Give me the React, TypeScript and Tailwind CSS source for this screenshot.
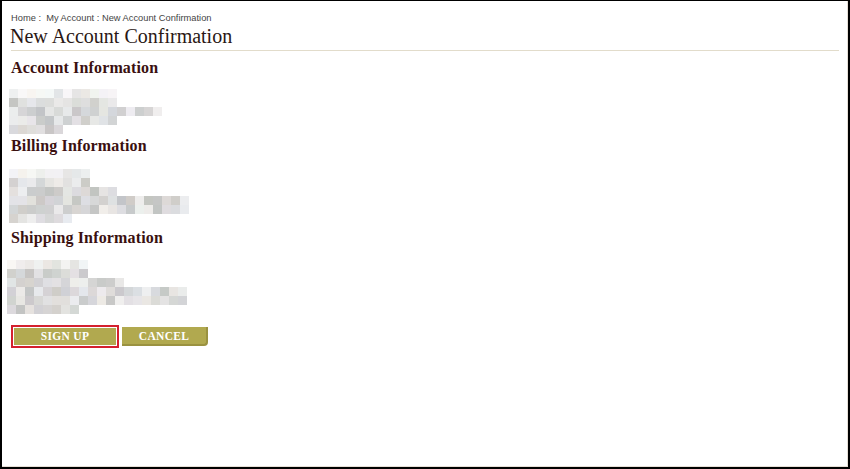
import React from "react";

function rng(seed: number) {
  let s = seed;
  return () => {
    s = (s * 1103515245 + 12345) & 0x7fffffff;
    return s / 0x7fffffff;
  };
}

function makeBlocks(seed: number, widths: number[], lightFirst: boolean) {
  const r = rng(seed);
  return widths.map((w, ri) =>
    Array.from({ length: w }, () => {
      const light = lightFirst && ri === 0;
      const base = light ? 228 : 196;
      const span = light ? 20 : 44;
      const v = Math.round(base + r() * span);
      const tint = Math.round((r() - 0.5) * 8);
      const rr = Math.min(250, v + tint);
      const gg = Math.min(250, v);
      const bb = Math.min(250, v + Math.round((r() - 0.5) * 10));
      return `rgb(${rr},${gg},${bb})`;
    })
  );
}

function Blocks({ seed, widths, className = "" }: { seed: number; widths: number[]; className?: string }) {
  const rows = makeBlocks(seed, widths, true);
  return (
    <div className={`flex flex-col ${className}`}>
      {rows.map((row, i) => (
        <div key={i} className="flex h-[9px]">
          {row.map((c, j) => (
            <div key={j} className="h-[9px] w-[9px]" style={{ backgroundColor: c }} />
          ))}
        </div>
      ))}
    </div>
  );
}

const serif = "font-['Liberation_Serif',Georgia,serif]";

export default function App() {
  return (
    <div className="w-[850px] h-[469px] bg-black pt-[1px] pl-[2px] pr-[2px] pb-[2px]">
      <div className="w-full h-full bg-white border-r border-b border-[#e6dfd6] pl-[7px] pr-[8px]">
        <div className="pt-[12px] pl-[2px] text-[9.3px] leading-[10px] text-[#444] font-['Liberation_Sans',Arial,sans-serif]">
          Home :&nbsp; My Account : New Account Confirmation
        </div>
        <h1 className={`${serif} mt-[1px] pl-[1px] text-[20px] leading-[24px] text-[#2a1714]`}>
          New Account Confirmation
        </h1>
        <div className="mt-[2px] ml-[2px] h-px bg-[#e2dccb]" />
        <h2 className={`${serif} mt-[8px] pl-[2px] text-[16px] leading-[18px] font-bold tracking-[0.15px] text-[#3a1010]`}>
          Account Information
        </h2>
        <Blocks seed={7} widths={[12, 12, 17, 12, 6]} className="mt-[12px]" />
        <h2 className={`${serif} mt-[3px] pl-[2px] text-[16px] leading-[18px] font-bold tracking-[0.15px] text-[#3a1010]`}>
          Billing Information
        </h2>
        <Blocks seed={19} widths={[9, 9, 12, 20, 20, 7]} className="mt-[14px]" />
        <h2 className={`${serif} mt-[6px] pl-[2px] text-[16px] leading-[18px] font-bold tracking-[0.15px] text-[#3a1010]`}>
          Shipping Information
        </h2>
        <Blocks seed={31} widths={[9, 9, 13, 20, 20, 8]} className="mt-[13px] -ml-[2px]" />
        <div className="mt-[11px] ml-[2px] flex items-start gap-[3px]">
          <div className="border-2 border-[#d4202e] p-px">
            <div className={`${serif} w-[102px] h-[17px] bg-[#b1a94f] text-white font-bold text-[11.5px] leading-[17px] text-center tracking-[0.3px]`}>
              SIGN UP
            </div>
          </div>
          <div className={`${serif} mt-[2px] w-[86px] h-[19px] bg-[#b1a94f] rounded-br-[4px] border-r-2 border-b-2 border-[#9a9240] text-white font-bold text-[11.5px] leading-[18px] text-center tracking-[0.3px]`}>
            CANCEL
          </div>
        </div>
      </div>
    </div>
  );
}
